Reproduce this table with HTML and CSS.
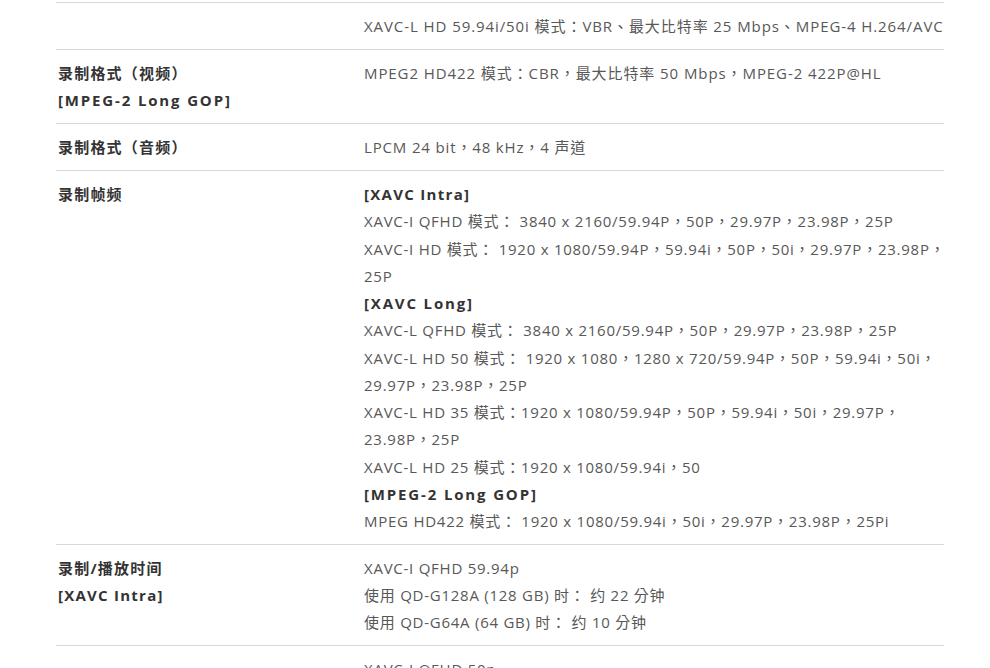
FILE: index.html
```html
<!DOCTYPE html>
<html lang="zh-CN">
<head>
<meta charset="utf-8">
<title>规格</title>
<link rel="stylesheet" href="styles.css">
</head>
<body>
<div class="spec">
  <div class="row">
    <div class="label"></div>
    <div class="value wide" lang="zh-TW">
      <div class="line">XAVC-L HD 59.94i/50i 模式：VBR、最大比特率 25 Mbps、MPEG-4 H.264/AVC</div>
    </div>
  </div>
  <div class="row">
    <div class="label">
      <div class="line">录制格式（视频）</div>
      <div class="line latin">[MPEG-2 Long GOP]</div>
    </div>
    <div class="value wide" lang="zh-TW">
      <div class="line">MPEG2 HD422 模式：CBR，最大比特率 50 Mbps，MPEG-2 422P@HL</div>
    </div>
  </div>
  <div class="row">
    <div class="label">
      <div class="line">录制格式（音频）</div>
    </div>
    <div class="value mid" lang="zh-TW">
      <div class="line">LPCM 24 bit，48 kHz，4 声道</div>
    </div>
  </div>
  <div class="row">
    <div class="label">
      <div class="line">录制帧频</div>
    </div>
    <div class="value tall" lang="zh-TW">
      <div class="line head">[XAVC Intra]</div>
      <div class="line">XAVC-I QFHD 模式： 3840 x 2160/59.94P，50P，29.97P，23.98P，25P</div>
      <div class="line">XAVC-I HD 模式： 1920 x 1080/59.94P，59.94i，50P，50i，29.97P，23.98P，</div>
      <div class="line">25P</div>
      <div class="line head long">[XAVC Long]</div>
      <div class="line">XAVC-L QFHD 模式： 3840 x 2160/59.94P，50P，29.97P，23.98P，25P</div>
      <div class="line">XAVC-L HD 50 模式： 1920 x 1080，1280 x 720/59.94P，50P，59.94i，50i，</div>
      <div class="line">29.97P，23.98P，25P</div>
      <div class="line">XAVC-L HD 35 模式：1920 x 1080/59.94P，50P，59.94i，50i，29.97P，</div>
      <div class="line">23.98P，25P</div>
      <div class="line">XAVC-L HD 25 模式：1920 x 1080/59.94i，50</div>
      <div class="line head wide-head">[MPEG-2 Long GOP]</div>
      <div class="line">MPEG HD422 模式： 1920 x 1080/59.94i，50i，29.97P，23.98P，25Pi</div>
    </div>
  </div>
  <div class="row">
    <div class="label">
      <div class="line">录制/播放时间</div>
      <div class="line latin mid">[XAVC Intra]</div>
    </div>
    <div class="value" lang="zh-TW">
      <div class="line">XAVC-I QFHD 59.94p</div>
      <div class="line">使用 QD-G128A (128 GB) 时： 约 22 分钟</div>
      <div class="line">使用 QD-G64A (64 GB) 时： 约 10 分钟</div>
    </div>
  </div>
  <div class="row">
    <div class="label"></div>
    <div class="value" lang="zh-TW">
      <div class="line">XAVC-I QFHD 50p</div>
    </div>
  </div>
</div>
</body>
</html>
```

FILE: styles.css
```css
html, body {
  margin: 0;
  padding: 0;
  background: #ffffff;
}
body {
  font-family: "Open Sans", "Noto Sans CJK SC", sans-serif;
  font-size: 15px;
  color: #585858;
  height: 668px;
  overflow: hidden;
}
.spec {
  width: 888px;
  margin: 2px 0 0 56px;
}
.row {
  display: grid;
  grid-template-columns: 308px 1fr;
  border-top: 1px solid #d8d8d8;
  padding: 10px 0 9px;
  line-height: 27px;
}
.line {
  white-space: nowrap;
}
.label {
  padding-left: 2px;
  font-weight: 700;
  color: #333333;
  letter-spacing: 1.2px;
}
.label .latin {
  letter-spacing: 1.85px;
}
.label .latin.mid {
  letter-spacing: 1.25px;
}
.value {
  font-family: "Open Sans", "Noto Sans CJK TC", sans-serif;
  letter-spacing: 0.75px;
}
.value.wide {
  letter-spacing: 0.92px;
}
.value.mid {
  letter-spacing: 0.85px;
}
.value.tall {
  line-height: 27.25px;
}
.head {
  font-weight: 700;
  color: #333333;
  letter-spacing: 1.3px;
}
.head.long {
  letter-spacing: 1.85px;
}
.head.wide-head {
  letter-spacing: 1.85px;
}
```
